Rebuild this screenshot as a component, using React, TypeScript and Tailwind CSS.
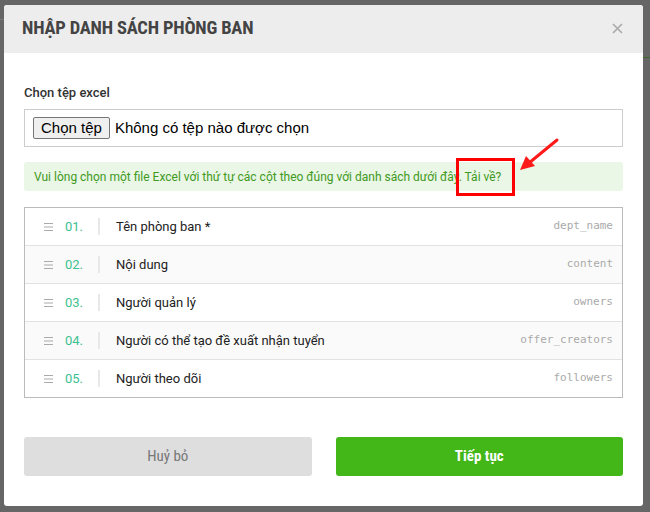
import React from "react";

const rows = [
  { n: "01.", label: "Tên phòng ban *", code: "dept_name" },
  { n: "02.", label: "Nội dung", code: "content" },
  { n: "03.", label: "Người quản lý", code: "owners" },
  { n: "04.", label: "Người có thể tạo đề xuất nhận tuyển", code: "offer_creators" },
  { n: "05.", label: "Người theo dõi", code: "followers" },
];

const cond = {
  fontFamily: '"Roboto Condensed", "Liberation Sans Narrow", "DejaVu Sans Condensed", Roboto, sans-serif',
};

export default function App() {
  return (
    <div className="relative h-[512px] w-[650px] overflow-hidden bg-[#666666] pl-[4px] pt-[5px]" style={{ fontFamily: "Roboto, sans-serif" }}>
      <div className="absolute left-0 top-[19px] h-px w-[4px] bg-[#777]" />
      <div className="absolute right-0 top-[57px] h-px w-[7px] bg-[#3a6b2a]" />
      <div className="flex h-[501px] w-[639px] flex-col overflow-hidden rounded-[3px] bg-white">
        <div className="flex h-[48px] shrink-0 items-center justify-between bg-[#ededed] pl-[18px] pr-[20px]">
          <div className="text-[18.5px] font-bold tracking-[-0.2px] text-[#444]" style={cond}>
            NHẬP DANH SÁCH PHÒNG BAN
          </div>
          <svg width="11" height="11" viewBox="0 0 11 11" className="mt-[-2px]">
            <path d="M1 1L10 10M10 1L1 10" stroke="#aaa" strokeWidth="1.6" />
          </svg>
        </div>
        <div className="relative flex flex-1 flex-col px-[20px] pt-[32px]">
          <div className="text-[13px] font-medium leading-[16px] text-[#333]">Chọn tệp excel</div>
          <div className="mt-[8px] flex h-[38px] items-center border border-[#ccc] px-[8px]" style={{ fontFamily: '"Liberation Sans", Arial, sans-serif' }}>
            <span className="flex h-[22px] items-center rounded-[2px] border border-[#767676] bg-[#efefef] px-[7px] text-[15px] text-black">
              Chọn tệp
            </span>
            <span className="ml-[5px] text-[15px] text-black">Không có tệp nào được chọn</span>
          </div>
          <div className="mt-[15px] flex h-[29px] items-center rounded-[3px] bg-[#eaf6e6] px-[10px] text-[12px] text-[#3f9a22]">
            Vui lòng chọn một file Excel với thứ tự các cột theo đúng với danh sách dưới đây. Tải về?
          </div>
          <div className="mt-[16px] border border-[#bbb]">
            {rows.map((r, i) => (
              <div
                key={r.n}
                className={`flex items-center ${i > 0 ? "h-[38px] border-t border-[#e2e2e2]" : "h-[37px]"} ${i % 2 === 1 ? "bg-[#fafafa]" : "bg-white"}`}
              >
                <svg width="9" height="8" viewBox="0 0 9 8" className="ml-[19px]">
                  <path d="M0 0.5H9M0 4H9M0 7.5H9" stroke="#aaa" strokeWidth="1" />
                </svg>
                <span className="ml-[12px] w-[33px] text-[13px] text-[#3cc190]">{r.n}</span>
                <span className="h-[17px] w-[2px] bg-[#e8e8e8]" />
                <span className="ml-[16px] flex-1 text-[13px] text-[#222]">{r.label}</span>
                <span className="mr-[9px] text-[11px] text-[#aaa]" style={{ fontFamily: '"DejaVu Sans Mono", monospace' }}>
                  {r.code}
                </span>
              </div>
            ))}
          </div>
          <div className="mt-[39px] flex gap-[24px]">
            <button className="h-[39px] flex-1 rounded-[3px] bg-[#dedede] text-[15px] font-normal text-[#777]" style={cond}>
              Huỷ bỏ
            </button>
            <button className="h-[39px] flex-1 rounded-[3px] bg-[#43b718] text-[15px] font-bold text-white" style={cond}>
              Tiếp tục
            </button>
          </div>
        </div>
      </div>
      <div className="absolute left-[456px] top-[158px] h-[38px] w-[59px] border-[3px] border-[#ff0000]" />
      <svg className="absolute left-[515px] top-[132px]" width="50" height="45" viewBox="0 0 50 45">
        <path d="M42 8L14 31" stroke="#ff1a1a" strokeWidth="3" strokeLinecap="round" />
        <path d="M5 38L11 24L20 34Z" fill="#ff1a1a" />
      </svg>
    </div>
  );
}
